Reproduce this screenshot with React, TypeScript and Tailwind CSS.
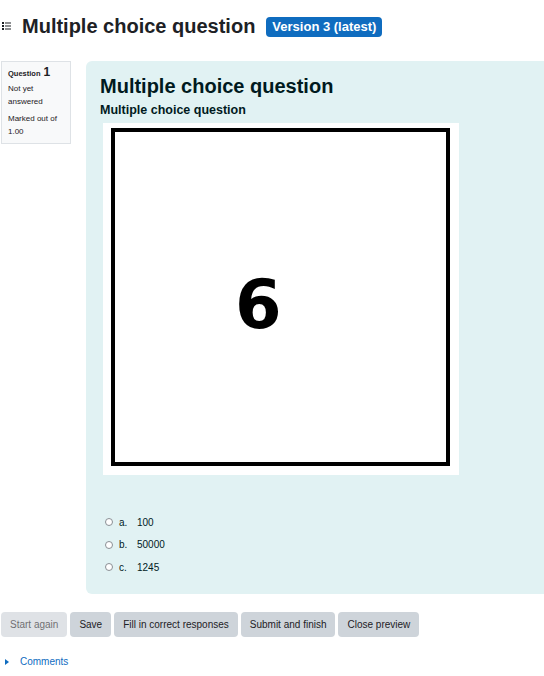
import React from 'react'

const options = [
  { letter: 'a.', text: '100' },
  { letter: 'b.', text: '50000' },
  { letter: 'c.', text: '1245' },
]

function ListIcon() {
  return (
    <svg width="9" height="8" viewBox="0 0 9 8" className="text-[#1d2125]">
      <rect x="0" y="0" width="2" height="2" fill="currentColor" />
      <rect x="0" y="3" width="2" height="2" fill="currentColor" />
      <rect x="0" y="6" width="2" height="2" fill="currentColor" />
      <rect x="3" y="0.5" width="6" height="1" fill="currentColor" />
      <rect x="3" y="3.5" width="6" height="1" fill="currentColor" />
      <rect x="3" y="6.5" width="6" height="1" fill="currentColor" />
    </svg>
  )
}

function Button({ label, disabled }: { label: string; disabled?: boolean }) {
  return (
    <button
      className={
        'h-[25px] rounded-[4px] bg-[#ced4da] px-[9px] text-[10px] text-[#1d2125] ' +
        (disabled ? 'opacity-65' : '')
      }
    >
      {label}
    </button>
  )
}

export default function App() {
  return (
    <div className="h-[676px] w-[544px] overflow-hidden bg-white font-['Liberation_Sans',Arial,sans-serif] text-[#1d2125]">
      <div className="flex h-[52px] items-center">
        <div className="ml-[2px] mr-[11px] flex items-center">
          <ListIcon />
        </div>
        <h1 className="text-[20px] font-bold leading-6">Multiple choice question</h1>
        <span className="ml-[11px] mt-[2px] rounded-[4px] bg-[#0f6cbf] px-[6px] py-[2px] text-[13px] font-bold leading-4 text-white">
          Version 3 (latest)
        </span>
      </div>

      <div className="mt-[9px] flex gap-[15px] pl-[1px]">
        <div className="h-[83px] w-[70px] shrink-0 border border-[#dee2e6] bg-[#f8f9fa] px-[6px] pt-[4px] text-[8px] leading-[13px]">
          <div className="flex items-baseline">
            <span className="text-[7.5px] font-bold">Question</span>
            <span className="ml-[3px] text-[12px] font-bold">1</span>
          </div>
          <div className="mt-[2px]">Not yet answered</div>
          <div className="mt-[4px]">Marked out of 1.00</div>
        </div>

        <div className="h-[533px] flex-1 rounded-l-[6px] bg-[#e1f2f3] px-[14px] pt-[13px] text-[#001a1e]">
          <h2 className="text-[20px] font-bold leading-6">Multiple choice question</h2>
          <div className="mt-[5px] text-[12.5px] font-bold leading-[15px]">Multiple choice question</div>

          <div className="ml-[3px] mt-[5px] h-[352px] w-[356px] bg-white pl-[8px] pt-[5px]">
            <div className="h-[338px] w-[339px] border-4 border-black pl-[120px] pt-[140px]">
              <span className="block font-['DejaVu_Sans',sans-serif] text-[67px] font-bold leading-none text-black">6</span>
            </div>
          </div>

          <div className="mt-[36px] pl-[5px]">
            {options.map((o) => (
              <div key={o.letter} className="flex h-[22.5px] items-center text-[10px]">
                <span className="h-[8px] w-[8px] rounded-full border border-[#8a8f94] bg-white" />
                <span className="ml-[6px] w-[18px]">{o.letter}</span>
                <span>{o.text}</span>
              </div>
            ))}
          </div>
        </div>
      </div>

      <div className="ml-[1px] mt-[18px] flex gap-[3px]">
        <Button label="Start again" disabled />
        <Button label="Save" />
        <Button label="Fill in correct responses" />
        <Button label="Submit and finish" />
        <Button label="Close preview" />
      </div>

      <div className="ml-[5px] mt-[17px] flex items-center text-[10px] text-[#0f6cbf]">
        <svg width="4" height="6" viewBox="0 0 4 6">
          <path d="M0 0 L4 3 L0 6 Z" fill="currentColor" />
        </svg>
        <span className="ml-[11px]">Comments</span>
      </div>
    </div>
  )
}
